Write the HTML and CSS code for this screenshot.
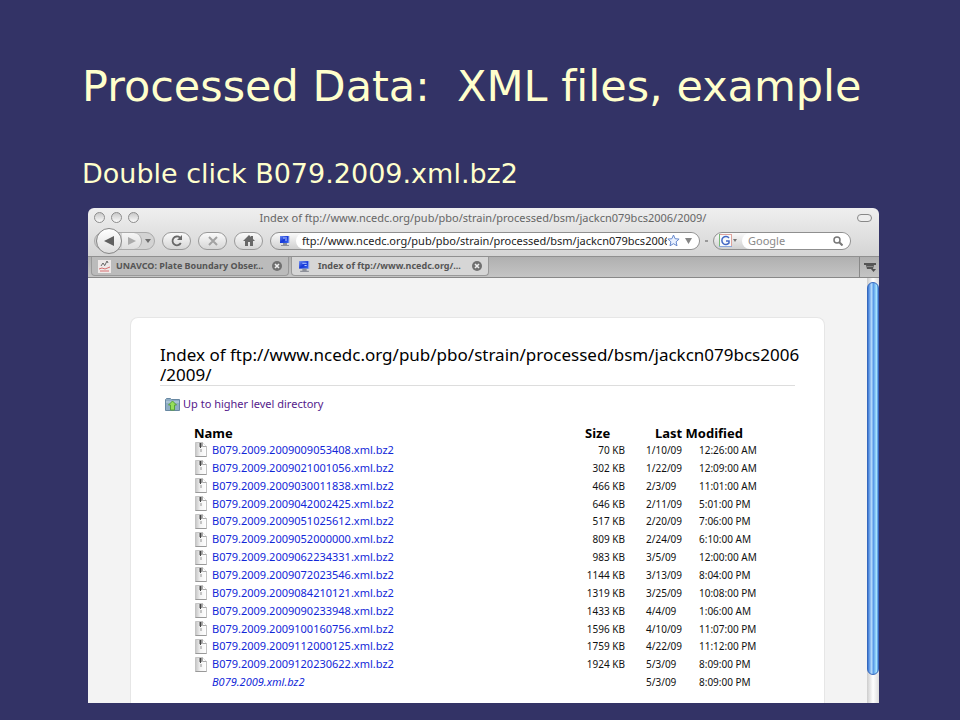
FILE: index.html
```html
<!DOCTYPE html>
<html lang="en">
<head>
<meta charset="utf-8">
<title>Processed Data: XML files, example</title>
<link rel="stylesheet" href="styles.css">
</head>
<body>
<svg class="defs" width="0" height="0" aria-hidden="true">
  <defs>
    <linearGradient id="screen" x1="0" y1="0" x2="1" y2="1"><stop offset="0" stop-color="#6c8cf0"/><stop offset=".5" stop-color="#1436d8"/><stop offset="1" stop-color="#3f6cf0"/></linearGradient>
    <linearGradient id="page" x1="0" y1="0" x2="1" y2="0"><stop offset="0" stop-color="#c4c4c4"/><stop offset=".45" stop-color="#f4f4f4"/><stop offset="1" stop-color="#fff"/></linearGradient>
  </defs>
  <symbol id="monitor" viewBox="0 0 12 12"><path d="M1 1h9v7H1z" fill="url(#screen)"/><path d="M4 3h4M6 5h2" stroke="#b8ccff"/><path d="M10 1v7" stroke="#9fb2e8"/><path d="M4 8h4v2H4zM2 10h8v1H2z" fill="#8d9099"/></symbol>
  <symbol id="close" viewBox="0 0 10 10"><circle cx="5" cy="5" r="5" fill="#707070"/><path d="M3 3l4 4M7 3l-4 4" stroke="#eee" stroke-width="1.6"/></symbol>
  <symbol id="zip" viewBox="0 0 12 15"><path d="M.5.5h7l4 4v10H.5z" fill="url(#page)" stroke="#c4c4c4"/><path d="M7.500.5v4h4" fill="#fff" stroke="#aaa"/><path d="M4 1h3v4H4z" fill="#999"/><path d="M5.500 1v5" stroke="#444"/><path d="M5 7h2v3H5z" fill="#c4c4c4"/><path d="M.5 14.500h11" stroke="#999"/></symbol>
</svg>

<main class="slide">
  <h1>Processed Data:&nbsp; XML files, example</h1>
  <p class="lead">Double click B079.2009.xml.bz2</p>

  <section class="window" aria-label="Browser">
    <header class="titlebar">
      <div class="lights"><button aria-label="Close"></button><button aria-label="Minimize"></button><button aria-label="Zoom"></button></div>
      <span class="caption">Index of ftp://www.ncedc.org/pub/pbo/strain/processed/bsm/jackcn079bcs2006/2009/</span>
      <button class="lozenge" aria-label="Toggle toolbar"></button>
    </header>

    <div class="toolbar">
      <div class="history">
        <button class="back" aria-label="Back"><svg width="10" height="10" viewBox="0 0 10 10"><path d="M10 0v10L0 5z" fill="#606060"/></svg></button>
        <button class="forward" aria-label="Forward"><svg width="8" height="8" viewBox="0 0 8 8"><path d="M0 0v8l8-4z" fill="#ababab"/></svg></button>
        <button class="recent" aria-label="Recent pages"><svg width="6" height="4" viewBox="0 0 6 4"><path d="M0 0h6L3 4z" fill="#6c6c6c"/></svg></button>
      </div>
      <button class="pill" aria-label="Reload"><svg width="12" height="12" viewBox="0 0 12 12"><path d="M9.800 8A4.400 4.400 0 1 1 9 2.700" fill="none" stroke="#686868" stroke-width="1.800"/><path d="M11 0v5H6z" fill="#686868"/></svg></button>
      <button class="pill" aria-label="Stop"><svg width="10" height="10" viewBox="0 0 10 10"><path d="M1 1l8 8M9 1l-8 8" stroke="#a2a2a2" stroke-width="2"/></svg></button>
      <button class="pill" aria-label="Home"><svg width="12" height="11" viewBox="0 0 12 11"><path d="M6 0L0 6h2v5h3V7h2v4h3V6h2l-2-2V1H8v1z" fill="#686868"/></svg></button>
      <div class="address">
        <svg class="site" width="12" height="12"><use href="#monitor"/></svg>
        <div class="field">
          <input type="text" aria-label="Address" value="ftp://www.ncedc.org/pub/pbo/strain/processed/bsm/jackcn079bcs2006/2009/">
          <svg class="star" width="13" height="13" viewBox="0 0 13 13"><path d="M6.500 1l1.600 3.700 4 .4-3 2.700.9 4-3.500-2.100L3 11.800l.9-4-3-2.700 4-.4z" fill="#e9f1ff" stroke="#6688cc"/></svg>
          <button aria-label="Show history"><svg width="7" height="6" viewBox="0 0 7 6"><path d="M0 0h7L3.500 6z" fill="#858585"/></svg></button>
        </div>
      </div>
      <span class="grip"></span>
      <div class="search">
        <button class="engine" aria-label="Search engine"><svg width="18" height="13" viewBox="0 0 18 13"><path d="M0 0h13v13H0z" fill="#f8fafc"/><path d="M0 .5h13" stroke="#e0a5a0"/><path d="M.5 0v13" stroke="#78b878"/><path d="M12.500 1v12" stroke="#dfa49c"/><path d="M0 12.500h13" stroke="#8aa6dc"/><path d="M10 4A4 4 0 1 0 10 9V7H7" fill="none" stroke="#4468c4" stroke-width="1.500"/><path d="M14 5h4l-2 3z" fill="#777"/></svg></button>
        <div class="field">
          <input type="text" aria-label="Search" placeholder="Google">
          <svg width="10" height="10" viewBox="0 0 10 10"><circle cx="4" cy="4" r="3" fill="none" stroke="#777" stroke-width="1.500"/><path d="M6 6l3.500 3.500" stroke="#777" stroke-width="2"/></svg>
        </div>
      </div>
    </div>

    <nav class="tabs" aria-label="Tabs">
      <div class="tab">
        <svg width="13" height="13" viewBox="0 0 13 13"><path d="M0 0h13v13H0z" fill="#eee9e8"/><path d="M3 6l2-3 2 3M7 5l2-4 1 2" stroke="#666" fill="none"/><path d="M1 9l3-1 3 1 5-2M2 11h9" stroke="#d66f70" fill="none"/></svg>
        <a href="#">UNAVCO: Plate Boundary Obser...</a>
        <button aria-label="Close tab"><svg width="10" height="10"><use href="#close"/></svg></button>
      </div>
      <div class="tab active">
        <svg width="13" height="13"><use href="#monitor"/></svg>
        <a href="#">Index of ftp://www.ncedc.org/...</a>
        <button aria-label="Close tab"><svg width="10" height="10"><use href="#close"/></svg></button>
      </div>
      <button class="all" aria-label="List all tabs"><svg width="12" height="9" viewBox="0 0 12 9"><path d="M0 0h12v2H0zM2 2h8l-1 4H3z" fill="#555"/><path d="M3 3.500h6" stroke="#888"/><path d="M7 6h5L9.500 9z" fill="#505050"/></svg></button>
    </nav>

    <div class="viewport">
      <article class="listing">
        <h2>Index of ftp://www.ncedc.org/pub/pbo/strain/processed/bsm/jackcn079bcs2006<br>/2009/</h2>
        <a class="up" href="#"><svg width="15" height="13" viewBox="0 0 15 13"><path d="M.5 1.500l1-1h4l1 1h8v11H.5z" fill="#8fadc4" stroke="#6888a2"/><path d="M1 4h13" stroke="#c4d8e4"/><path d="M7.500 3l4 4h-2v5h-4V7h-2z" fill="#96df58" stroke="#58a138"/></svg>Up to higher level directory</a>
        <table>
          <colgroup><col class="name"><col class="size"><col class="date"><col></colgroup>
          <thead><tr><th>Name</th><th>Size</th><th class="modified" colspan="2">Last Modified</th></tr></thead>
          <tbody>
            <tr><td><a href="#"><svg><use href="#zip"/></svg>B079.2009.2009009053408.xml.bz2</a></td><td>70 KB</td><td>1/10/09</td><td>12:26:00 AM</td></tr>
            <tr><td><a href="#"><svg><use href="#zip"/></svg>B079.2009.2009021001056.xml.bz2</a></td><td>302 KB</td><td>1/22/09</td><td>12:09:00 AM</td></tr>
            <tr><td><a href="#"><svg><use href="#zip"/></svg>B079.2009.2009030011838.xml.bz2</a></td><td>466 KB</td><td>2/3/09</td><td>11:01:00 AM</td></tr>
            <tr><td><a href="#"><svg><use href="#zip"/></svg>B079.2009.2009042002425.xml.bz2</a></td><td>646 KB</td><td>2/11/09</td><td>5:01:00 PM</td></tr>
            <tr><td><a href="#"><svg><use href="#zip"/></svg>B079.2009.2009051025612.xml.bz2</a></td><td>517 KB</td><td>2/20/09</td><td>7:06:00 PM</td></tr>
            <tr><td><a href="#"><svg><use href="#zip"/></svg>B079.2009.2009052000000.xml.bz2</a></td><td>809 KB</td><td>2/24/09</td><td>6:10:00 AM</td></tr>
            <tr><td><a href="#"><svg><use href="#zip"/></svg>B079.2009.2009062234331.xml.bz2</a></td><td>983 KB</td><td>3/5/09</td><td>12:00:00 AM</td></tr>
            <tr><td><a href="#"><svg><use href="#zip"/></svg>B079.2009.2009072023546.xml.bz2</a></td><td>1144 KB</td><td>3/13/09</td><td>8:04:00 PM</td></tr>
            <tr><td><a href="#"><svg><use href="#zip"/></svg>B079.2009.2009084210121.xml.bz2</a></td><td>1319 KB</td><td>3/25/09</td><td>10:08:00 PM</td></tr>
            <tr><td><a href="#"><svg><use href="#zip"/></svg>B079.2009.2009090233948.xml.bz2</a></td><td>1433 KB</td><td>4/4/09</td><td>1:06:00 AM</td></tr>
            <tr><td><a href="#"><svg><use href="#zip"/></svg>B079.2009.2009100160756.xml.bz2</a></td><td>1596 KB</td><td>4/10/09</td><td>11:07:00 PM</td></tr>
            <tr><td><a href="#"><svg><use href="#zip"/></svg>B079.2009.2009112000125.xml.bz2</a></td><td>1759 KB</td><td>4/22/09</td><td>11:12:00 PM</td></tr>
            <tr><td><a href="#"><svg><use href="#zip"/></svg>B079.2009.2009120230622.xml.bz2</a></td><td>1924 KB</td><td>5/3/09</td><td>8:09:00 PM</td></tr>
            <tr><td><a class="link" href="#">B079.2009.xml.bz2</a></td><td></td><td>5/3/09</td><td>8:09:00 PM</td></tr>
          </tbody>
        </table>
      </article>
      <div class="scrollbar"><div class="thumb"></div></div>
    </div>
  </section>
</main>
</body>
</html>
```
FILE: styles.css
```css
* { box-sizing: border-box; }
body { margin: 0; background: #333366; font-family: "DejaVu Sans", Verdana, sans-serif; font-variant-ligatures: none; }
button { border: 0; padding: 0; background: none; display: flex; align-items: center; justify-content: center; }
input { border: 0; padding: 0; background: none; min-width: 0; outline: none; }
a { color: inherit; text-decoration: none; }
svg { display: block; flex: none; }
.defs { position: absolute; }

.slide { min-height: 100vh; display: flex; flex-direction: column; padding: 59px 81px 17px 88px; color: #ffffcc; }
h1 { margin: 0 -20px 0 -6px; font-size: 43px; line-height: 54px; font-weight: 400; white-space: nowrap; }
.lead { margin: 44px 0 17px -6px; font-size: 27px; line-height: 34px; }

.window { flex: 1; display: flex; flex-direction: column; border-radius: 6px 6px 0 0; overflow: hidden; background: linear-gradient(#efefef, #d4d4d4 49px); font-family: "Noto Sans", "Open Sans", sans-serif; color: #222; }
.titlebar { display: flex; align-items: center; height: 19px; padding: 0 7px 0 6px; }
.lights { display: flex; gap: 6px; width: 60px; }
.lights button { width: 11px; height: 11px; border-radius: 50%; border: 1px solid #8c8c8c; background: linear-gradient(#c8c8c8, #fafafa); }
.caption { flex: 1; text-align: center; font-size: 11px; line-height: 18px; color: #666; }
.lozenge { width: 15px; height: 8px; margin-left: 45px; border: 1px solid #888; border-radius: 4px; background: #eee; }

.toolbar { display: flex; align-items: center; height: 30px; padding: 0 28px 2px 6px; gap: 7px; border-bottom: 1px solid #909090; }
.history { display: flex; align-items: center; width: 61px; height: 18px; border: 1px solid #aaa; border-radius: 9px; background: #d3d3d3; }
.back { width: 26px; height: 26px; margin-left: 1px; border: 1px solid #858585; border-radius: 50%; background: linear-gradient(#fff, #ddd); flex: none; }
.forward { width: 21px; height: 16px; border-right: 1px solid #aaa; border-radius: 0 9px 9px 0; background: linear-gradient(#f5f5f5, #ddd); }
.recent { width: 12px; }
.pill { flex: none; width: 29px; height: 18px; border: 1px solid #999; border-radius: 9px; background: linear-gradient(#fafafa, #d6d6d6); }
.address, .search { display: flex; align-items: center; height: 18px; border: 1px solid #8f8f8f; border-radius: 9px; background: linear-gradient(#fafafa, #d0d0d0); overflow: hidden; }
.address { flex: 1; min-width: 0; }
.site { margin: 0 5px 0 8px; }
.field { flex: 1; min-width: 0; display: flex; align-items: center; height: 16px; padding-left: 6px; border-radius: 8px; background: #fff; }
.field input { flex: 1; height: 16px; font: 11px "Noto Sans", "Open Sans", sans-serif; color: #222; }
.address .field button { width: 16px; margin-right: 3px; }
.grip { width: 3px; height: 2px; margin: 0 -2px; background: #999; }
.search { width: 138px; }
.engine { width: 28px; }
.search .field { padding-right: 7px; }
.search input::placeholder { color: #8a8a8a; opacity: 1; }

.tabs { display: flex; height: 21px; padding-left: 3px; background: linear-gradient(#b0b0b0, #c4c4c4); border-bottom: 1px solid #888; }
.tab { display: flex; align-items: center; gap: 5px; width: 198px; height: 19px; padding: 0 6px; border: 1px solid #999; border-top: 0; border-radius: 0 0 4px 4px; background: #bbb; font-size: 9px; line-height: 16px; font-weight: 700; color: #555; }
.tab a { flex: 1; white-space: nowrap; }
.active { margin-left: 2px; gap: 7px; background: #d6d6d6; }
.all { width: 20px; margin-left: auto; border-left: 1px solid #888; }

.viewport { flex: 1; display: flex; background: #f3f3f3; }
.listing { flex: 1; min-width: 0; margin: 39px 42px 0; padding: 27px 29px 10px; background: #fff; border: 1px solid #e6e6e6; border-bottom: 0; border-radius: 8px 8px 0 0; }
h2 { margin: 0; border-bottom: 1px solid #ddd; font-size: 17px; line-height: 20px; font-weight: 400; color: #000; white-space: nowrap; }
.up { display: flex; align-items: center; gap: 3px; margin: 9px 5px 12px; font-size: 11px; line-height: 18px; color: #551a8b; }
table { width: 569px; height: 265px; margin-left: 34px; border-collapse: collapse; table-layout: fixed; font-size: 10px; line-height: 14px; color: #111; }
th, td { padding: 0; text-align: left; white-space: nowrap; }
th { height: 16px; font-size: 13px; line-height: 16px; vertical-align: bottom; color: #000; }
.name { width: 391px; }
.size { width: 61px; }
.date { width: 53px; }
.modified { padding-left: 9px; }
td:nth-child(2) { padding-right: 21px; text-align: right; }
td a { display: flex; align-items: center; gap: 5px; padding-left: 1px; font-size: 11px; color: #1227d8; }
td svg { width: 12px; height: 15px; }
td .link { padding-left: 18px; font-style: italic; }
.scrollbar { width: 12px; padding: 4px 0 28px; background: linear-gradient(90deg, #ccc, #fff 50%, #ddd); }
.thumb { height: 100%; border: 1px solid #3568bd; border-radius: 6px; background: linear-gradient(90deg, #3977d6, #b0d8fa 35%, #5b9de9 55%, #a4e4ff 85%, #4e89d6); }
```
